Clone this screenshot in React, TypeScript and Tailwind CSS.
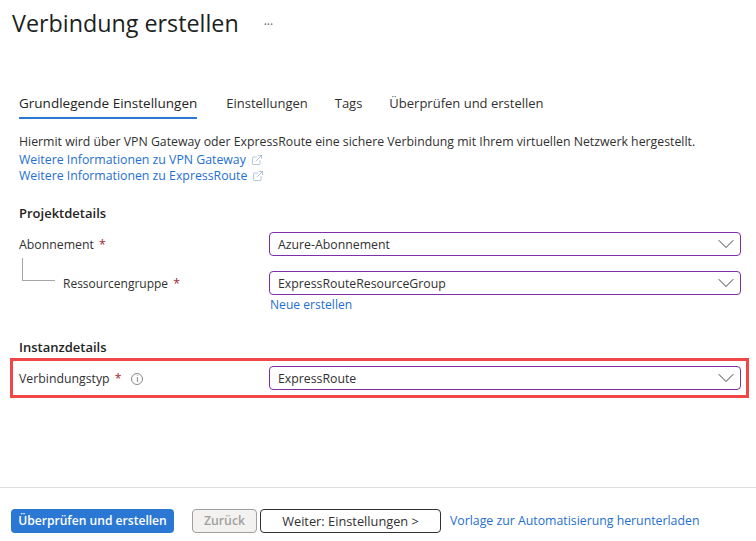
import { ChevronDown, ExternalLink } from "lucide-react";

function Req() {
  return <span className="text-[#a4262c] ml-[5px]">*</span>;
}

function Select({ value }: { value: string }) {
  return (
    <div className="w-[472px] h-6 flex items-center justify-between rounded-sm border border-[#7d2fa6] pl-2 text-[#323130]">
      <span className="mt-[1px]">{value}</span>
      <ChevronDown size={28} strokeWidth={0.8} className="text-[#323130] shrink-0" />
    </div>
  );
}

function DocLink({ children }: { children: string }) {
  return (
    <a className="flex items-center gap-[5px] h-4 text-[#1f6fd0]">
      {children}
      <ExternalLink size={12} strokeWidth={1} className="text-[#6b8fbf]" />
    </a>
  );
}

export default function App() {
  return (
    <div
      className="w-[756px] h-[541px] bg-white flex flex-col overflow-hidden text-[12.3px] leading-4 text-[#323130]"
      style={{ fontFamily: '"Open Sans", "Noto Sans", sans-serif' }}
    >
      <header className="flex items-center h-7 mt-[9px] ml-3">
        <h1 className="text-[23.3px] leading-7 font-medium text-[#201f1e]">Verbindung erstellen</h1>
        <span className="ml-[25px] mt-[3px] text-xs text-[#605e5c]">···</span>
      </header>

      {/* Tabs */}
      <nav className="flex mt-[51px] ml-[19px] gap-[27px] h-[31px] text-[13px]">
        <div className="border-b-[2px] border-[#2b78d4] h-[31px] pt-[7px] mr-[2px] text-[13.5px] text-[#252423]">
          Grundlegende Einstellungen
        </div>
        <div className="pt-[7px]">Einstellungen</div>
        <div className="pt-[7px]">Tags</div>
        <div className="pt-[7px]">Überprüfen und erstellen</div>
      </nav>

      <div className="ml-[19px] mt-[15px]">
        <p className="h-[18px]">
          Hiermit wird über VPN Gateway oder ExpressRoute eine sichere Verbindung mit Ihrem virtuellen Netzwerk hergestellt.
        </p>
        <DocLink>Weitere Informationen zu VPN Gateway</DocLink>
        <DocLink>Weitere Informationen zu ExpressRoute</DocLink>
      </div>

      <h2 className="ml-[19px] mt-[21px] text-[13px] font-semibold text-[#252423]">Projektdetails</h2>

      <div className="flex items-center ml-[19px] mt-[11px]">
        <div className="w-[250px] mt-[1px]">
          Abonnement
          <Req />
        </div>
        <Select value="Azure-Abonnement" />
      </div>

      <div className="flex items-center ml-[19px] mt-[15px]">
        <div className="w-[250px] flex items-center mt-[1px]">
          <div className="w-[33px] h-[23px] ml-[3px] -mt-[28px] border-l border-b border-[#a6a6a6]" />
          <span className="ml-2 text-[12px]">Ressourcengruppe</span>
          <Req />
        </div>
        <Select value="ExpressRouteResourceGroup" />
      </div>

      <a className="ml-[270px] mt-[2px] h-[16px] text-[12.1px] text-[#1f6fd0]">Neue erstellen</a>

      <h2 className="ml-[19px] mt-[26px] text-[13px] font-semibold text-[#252423]">Instanzdetails</h2>

      <div className="mt-[3px] ml-[10px] w-[739px] h-[40px] border-[3px] border-[#f04646] flex items-center pl-[6px]">
        <div className="w-[250px] flex items-center mt-[1px]">
          <span>Verbindungstyp</span>
          <Req />
          <span className="ml-[10px] w-3 h-3 rounded-full border border-[#8a8886] text-[9px] leading-[10px] text-center text-[#605e5c]">
            i
          </span>
        </div>
        <Select value="ExpressRoute" />
      </div>

      {/* Footer */}
      <footer className="mt-auto h-[54px] border-t border-[#e1dfdd] flex items-center pl-[11px] pt-3 font-semibold">
        <button className="w-[163px] h-6 rounded-sm bg-[#2b78d4] text-[12.1px] text-white">Überprüfen und erstellen</button>
        <button className="w-[65px] h-6 ml-[18px] rounded-sm border border-[#a19f9d] bg-[#f3f2f1] text-[#a19f9d]">Zurück</button>
        <button className="w-[181px] h-6 ml-[3px] rounded-sm border border-[#323130] text-[12.8px] font-normal text-[#323130]">
          Weiter: Einstellungen &gt;
        </button>
        <a className="ml-[9px] font-normal text-[#1f6fd0]">Vorlage zur Automatisierung herunterladen</a>
      </footer>
    </div>
  );
}
